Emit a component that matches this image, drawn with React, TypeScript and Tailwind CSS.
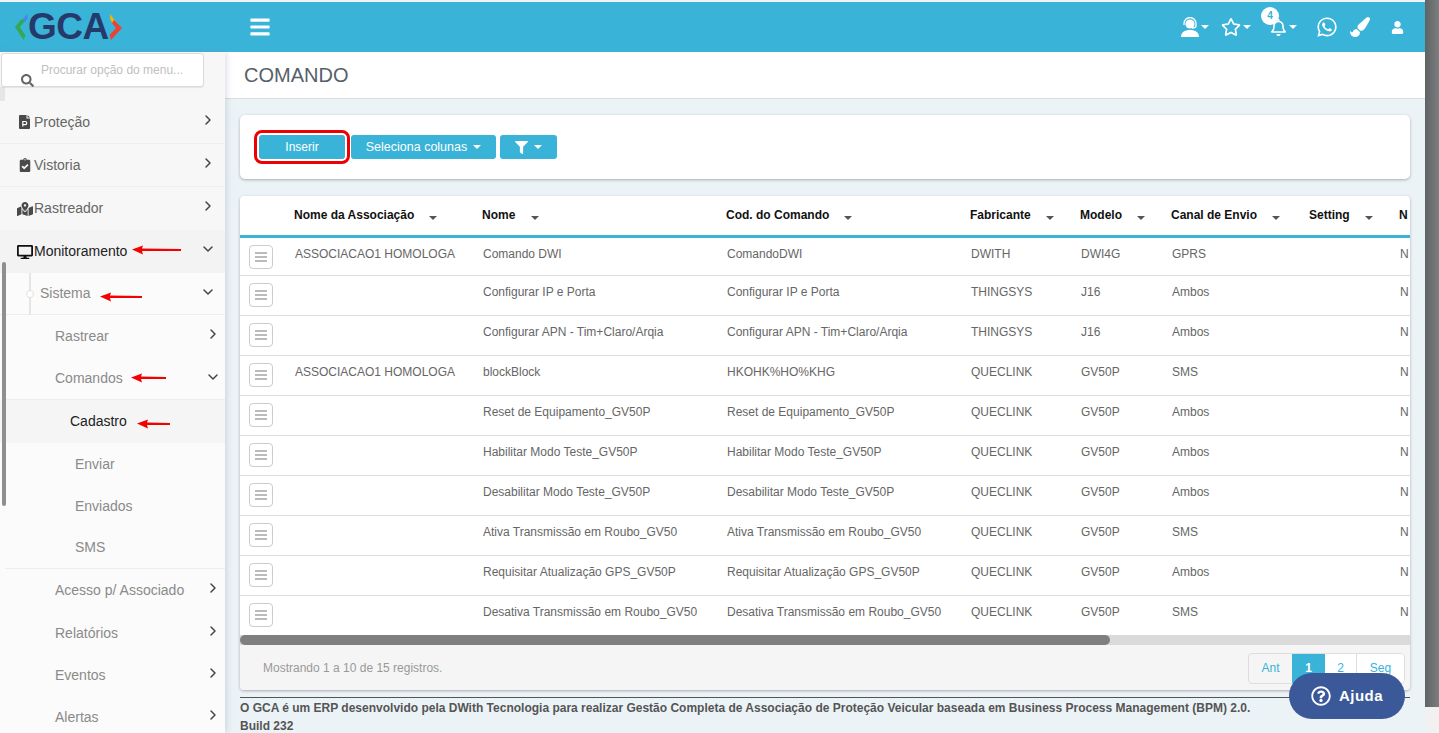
import React from "react";
import { ChevronRight, ChevronDown } from "lucide-react";
import { FaBars, FaClipboardCheck, FaDesktop, FaFilter, FaMapMarkedAlt, FaPaintBrush, FaRegBell, FaRegQuestionCircle, FaRegStar, FaSearch, FaUser, FaWhatsapp } from "react-icons/fa";

const Caret = ({ c = "border-t-white" }: { c?: string }) => (
  <span className={`inline-block w-0 h-0 border-x-[4px] border-x-transparent border-t-[4px] ${c}`} />
);

const Arrow = ({ w, cls }: { w: number; cls: string }) => (
  <svg width={w} height="10" viewBox={`0 0 ${w} 10`} className={`absolute ${cls}`}>
    <polygon points={`0,4.5 11,0.5 10,3.5 ${w},4 ${w},6 10,6 11,9.5`} fill="#f30000" />
  </svg>
);

const FileP = () => (
  <svg width="12" height="14" viewBox="0 0 12 14" className="mx-[1px]">
    <path d="M1 0h6.5v3.5H11V13a1 1 0 0 1-1 1H1a1 1 0 0 1-1-1V1a1 1 0 0 1 1-1zM8.5 0 11 2.6H8.5z" fill="#4a4a4a" />
    <path d="M3.8 11.5V6.5h2.4a1.5 1.5 0 0 1 0 3.2H3.8" fill="none" stroke="#fff" strokeWidth="1.2" />
  </svg>
);

type RowProps = { label: string; pl: number; h: number; open?: boolean; noChev?: boolean; icon?: React.ReactNode; cls?: string; text?: string; children?: React.ReactNode };
const Row = ({ label, pl, h, open, noChev, icon, cls = "", text = "text-[#777]", children }: RowProps) => (
  <div className={`relative flex items-center shrink-0 ${cls}`} style={{ height: h, paddingLeft: pl }}>
    {icon && <span className="absolute left-[17px] top-0 bottom-0 flex items-center w-[16px] justify-center">{icon}</span>}
    <span className={`text-[14px] ${text}`}>{label}</span>
    {!noChev && (
      <span className="absolute left-[200px] top-[11px] text-[#444]">
        {open ? <ChevronDown size={16} strokeWidth={2.2} /> : <ChevronRight size={16} strokeWidth={2.2} />}
      </span>
    )}
    {children}
  </div>
);

const Sidebar = () => (
  <aside className="relative w-[225px] shrink-0 bg-[#f7f7f7] shadow-[2px_0_6px_rgba(120,140,160,0.25)] z-10 overflow-hidden flex flex-col">
    <div className="h-[49px] shrink-0">
      <div className="relative mt-[1px] ml-[1px] w-[203px] h-[34px] bg-white border border-[#dcdcdc] rounded-[3px] shadow-[0_1px_1px_rgba(0,0,0,0.08)]">
        <span className="absolute left-[39px] top-[9px] text-[12px] leading-[14px] text-[#c0c0c0]">Procurar opção do menu...</span>
        <FaSearch className="absolute left-[19px] top-[20px] text-[#666]" size={13} />
      </div>
      <div className="w-[5px] h-[14px] bg-[#e6e6e6]" />
    </div>
    <div className="ml-[5px] flex flex-col">
      <Row label="Proteção" pl={34} h={43} icon={<FileP />} cls="border-b border-[#efefef] -ml-[5px] pl-0" text="text-[#666]" />
      <Row label="Vistoria" pl={34} h={43} icon={<FaClipboardCheck size={14} className="text-[#4a4a4a]" />} cls="border-b border-[#efefef] -ml-[5px]" text="text-[#666]" />
      <Row label="Rastreador" pl={34} h={43} icon={<FaMapMarkedAlt size={16} className="text-[#4a4a4a]" />} cls="-ml-[5px]" text="text-[#666]" />
      <Row label="Monitoramento" pl={34} h={43} open icon={<FaDesktop size={16} className="text-[#111]" />} cls="bg-[#f3f3f3] -ml-[5px]" text="text-[#222]">
        <Arrow w={49} cls="left-[132px] top-[15px]" />
      </Row>
      <div className="-ml-[5px] bg-[#fbfbfb] pl-[5px]">
        <Row label="Sistema" pl={40} h={42} open cls="border-b border-[#eeeeee] -ml-[5px]" text="text-[#8a8a8a]">
          <span className="absolute left-[29px] top-0 h-[42px] w-[2px] bg-[#e5e5e5]" />
          <span className="absolute left-[26px] top-[17px] w-[8px] h-[8px] rounded-full bg-white border border-[#e0e0e0]" />
          <Arrow w={42} cls="left-[100px] top-[19px]" />
        </Row>
        <Row label="Rastrear" pl={50} h={43} text="text-[#8a8a8a]" />
        <Row label="Comandos" pl={50} h={42} open cls="border-b border-[#eeeeee]" text="text-[#8a8a8a]">
          <Arrow w={35} cls="left-[126px] top-[15px]" />
        </Row>
        <Row label="Cadastro" pl={70} h={43} noChev cls="bg-[#f5f5f5] -ml-[5px] pl-[75px]" text="text-[#222]">
          <Arrow w={33} cls="left-[137px] top-[19px]" />
        </Row>
        <Row label="Enviar" pl={70} h={42} noChev text="text-[#8a8a8a]" />
        <Row label="Enviados" pl={70} h={42} noChev text="text-[#8a8a8a]" />
        <Row label="SMS" pl={70} h={42} noChev cls="border-b border-[#eeeeee]" text="text-[#8a8a8a]" />
        <Row label="Acesso p/ Associado" pl={50} h={43} text="text-[#8a8a8a]" />
        <Row label="Relatórios" pl={50} h={42} text="text-[#8a8a8a]" />
        <Row label="Eventos" pl={50} h={42} text="text-[#8a8a8a]" />
        <Row label="Alertas" pl={50} h={42} text="text-[#8a8a8a]" />
      </div>
    </div>
    <div className="absolute left-[2px] top-[210px] w-[4px] h-[244px] rounded-full bg-[#8f8f8f]" />
  </aside>
);

const rows = [
  ["ASSOCIACAO1 HOMOLOGA", "Comando DWI", "ComandoDWI", "DWITH", "DWI4G", "GPRS"],
  ["", "Configurar IP e Porta", "Configurar IP e Porta", "THINGSYS", "J16", "Ambos"],
  ["", "Configurar APN - Tim+Claro/Arqia", "Configurar APN - Tim+Claro/Arqia", "THINGSYS", "J16", "Ambos"],
  ["ASSOCIACAO1 HOMOLOGA", "blockBlock", "HKOHK%HO%KHG", "QUECLINK", "GV50P", "SMS"],
  ["", "Reset de Equipamento_GV50P", "Reset de Equipamento_GV50P", "QUECLINK", "GV50P", "Ambos"],
  ["", "Habilitar Modo Teste_GV50P", "Habilitar Modo Teste_GV50P", "QUECLINK", "GV50P", "Ambos"],
  ["", "Desabilitar Modo Teste_GV50P", "Desabilitar Modo Teste_GV50P", "QUECLINK", "GV50P", "Ambos"],
  ["", "Ativa Transmissão em Roubo_GV50", "Ativa Transmissão em Roubo_GV50", "QUECLINK", "GV50P", "SMS"],
  ["", "Requisitar Atualização GPS_GV50P", "Requisitar Atualização GPS_GV50P", "QUECLINK", "GV50P", "Ambos"],
  ["", "Desativa Transmissão em Roubo_GV50", "Desativa Transmissão em Roubo_GV50", "QUECLINK", "GV50P", "SMS"],
];

const heads: [string, string][] = [
  ["Nome da Associação", "ml-[15px]"],
  ["Nome", "ml-[16px]"],
  ["Cod. do Comando", "ml-[15px]"],
  ["Fabricante", "ml-[15px]"],
  ["Modelo", "ml-[15px]"],
  ["Canal de Envio", "ml-[15px]"],
  ["Setting", "ml-[15px]"],
  ["N", ""],
];
const widths = ["w-[188px]", "w-[244px]", "w-[244px]", "w-[110px]", "w-[91px]", "w-[138px]", "w-[90px]", "w-[100px]"];

const DataTable = () => (
  <div className="overflow-hidden">
    <table className="table-fixed border-collapse w-[1248px] text-[12px]">
      <thead>
        <tr className="h-[40px] border-b-[3px] border-[#3ab3d9]">
          <th className="w-[43px]" />
          {heads.map(([h, m], i) => (
            <th key={h} className={`${widths[i]} pl-[11px] text-left font-bold text-[#111] whitespace-nowrap`}>
              {h}
              {m && <span className={`${m} align-middle inline-block`}><Caret c="border-t-[#555]" /></span>}
            </th>
          ))}
        </tr>
      </thead>
      <tbody>
        {rows.map((r, i) => (
          <tr key={i} className={`${i === 0 ? "h-[39px]" : "h-[40px]"} ${i < 9 ? "border-b border-[#dddddd]" : ""} text-[#666]`}>
            <td className="pl-[9px] align-top pt-[7px]">
              <span className="flex flex-col items-center justify-center gap-[2px] w-[24px] h-[24px] border border-[#cccccc] rounded-[4px]">
                <i className="block w-[12px] h-[2px] bg-[#bbbbbb]" />
                <i className="block w-[12px] h-[2px] bg-[#bbbbbb]" />
                <i className="block w-[12px] h-[2px] bg-[#bbbbbb]" />
              </span>
            </td>
            {r.map((c, j) => (
              <td key={j} className="pl-[12px] align-top pt-[7px] whitespace-nowrap">{c}</td>
            ))}
            <td />
            <td className="pl-[12px] align-top pt-[7px]">N</td>
          </tr>
        ))}
      </tbody>
    </table>
  </div>
);

const Header = () => (
  <header className="h-[52px] shrink-0 border-t-2 border-[#eef3f6] bg-[#3ab3d9] flex items-center relative">
    <div className="w-[225px] flex items-center pl-[15px]">
      <svg width="13" height="28" viewBox="0 0 13 28">
        <path d="M12 1 6.5 8 10 9 13 5z" fill="#4285f4" />
        <path d="M6.5 6 0 14l4 1 6-7z" fill="#34a853" />
        <path d="M0 14l8.5 13 2-4.5L4 13z" fill="#34a853" />
      </svg>
      <span className="font-['Liberation_Sans',sans-serif] font-bold text-[37px] leading-[30px] tracking-[-0.5px] text-[#26396b]">GCA</span>
      <svg width="13" height="28" viewBox="0 0 13 28">
        <path d="M1 1 7 9 4 11 1 6z" fill="#f4b400" />
        <path d="M5 7 13 15 2 27 0.5 22 7 15 3 10z" fill="#ea4335" />
      </svg>
    </div>
    <FaBars className="text-white ml-[24px]" size={22} />
    <div className="ml-auto flex items-center text-white">
      <span className="flex items-center gap-[2px] mr-[12px]">
        <svg width="18" height="20" viewBox="0 0 18 20" fill="none">
          <circle cx="9" cy="7" r="4.6" fill="#fff" />
          <path d="M3 8V6.5a6 6 0 0 1 12 0V9c0 1.2-1.5 2-4 2" stroke="#fff" strokeWidth="1.3" />
          <path d="M0 20c0-4.5 3.5-7 9-7s9 2.5 9 7z" fill="#fff" />
        </svg>
        <Caret />
      </span>
      <span className="flex items-center gap-[2px] mr-[19px]"><FaRegStar size={20} /><Caret /></span>
      <span className="relative flex items-center gap-[2px] mr-[19px]">
        <FaRegBell size={17} />
        <Caret />
        <span className="absolute -left-[9px] -top-[12px] w-[18px] h-[18px] rounded-full bg-white text-[#3ab3d9] text-[10px] font-bold flex items-center justify-center">4</span>
      </span>
      <FaWhatsapp size={22} className="mr-[12px]" />
      <FaPaintBrush size={20} className="mr-[21px]" />
      <FaUser size={13} className="mr-[21px]" />
    </div>
  </header>
);

export default function App() {
  return (
    <div className="w-[1439px] h-[733px] overflow-hidden flex bg-[#ecf3f7] font-['Liberation_Sans',Arial,sans-serif]">
      <div className="w-[1425px] shrink-0 flex flex-col">
        <Header />
        <div className="flex flex-1 min-h-0">
          <Sidebar />
          <main className="flex-1 min-w-0 flex flex-col">
            <div className="h-[47px] shrink-0 bg-white border-b border-[#d8dde1] pl-[19px] flex items-center">
              <h1 className="text-[20px] text-[#56606a] -mt-[1px]">COMANDO</h1>
            </div>
            <div className="px-[15px] pt-[16px] flex flex-col">
              <div className="h-[64px] bg-white rounded-[5px] shadow-[0_1px_3px_rgba(0,0,0,0.3)] flex items-center pl-[19px] gap-[4px] text-white text-[12px]">
                <button className="relative w-[86px] h-[24px] bg-[#3ab3d9] rounded-[3px] mr-[1px] outline outline-[3px] outline-offset-[2px] outline-[#f00000] [outline-offset:2px]">Inserir</button>
                <button className="ml-[1px] w-[145px] h-[24px] bg-[#3ab3d9] rounded-[3px] flex items-center justify-center gap-[6px] text-[12.5px]">Seleciona colunas <Caret /></button>
                <button className="w-[57px] h-[24px] bg-[#3ab3d9] rounded-[3px] flex items-center justify-center gap-[6px]"><FaFilter size={13} /> <Caret /></button>
              </div>
              <div className="mt-[17px] bg-white rounded-[4px] shadow-[0_1px_3px_rgba(0,0,0,0.3)] overflow-hidden flex flex-col">
                <DataTable />
                <div className="h-[10px] bg-[#dadada]">
                  <div className="w-[870px] h-[10px] rounded-full bg-[#7f7f7f]" />
                </div>
                <div className="h-[45px] bg-[#f5f5f5] flex items-center pl-[23px] pr-[5px] text-[12px] text-[#999]">
                  <span>Mostrando 1 a 10 de 15 registros.</span>
                  <div className="ml-auto mt-[1px] flex h-[31px] border border-[#dddddd] rounded-[4px] overflow-hidden text-[#3ab3d9]">
                    <span className="w-[43px] flex items-center justify-center">Ant</span>
                    <span className="w-[33px] flex items-center justify-center bg-[#3ab3d9] text-white font-bold">1</span>
                    <span className="w-[32px] flex items-center justify-center bg-white border-r border-[#dddddd]">2</span>
                    <span className="w-[47px] flex items-center justify-center bg-white">Seg</span>
                  </div>
                </div>
              </div>
              <footer className="mt-[7px] border-t border-[#555] pt-[1px] text-[12px] leading-[18px] font-bold text-[#555]">
                O GCA é um ERP desenvolvido pela DWith Tecnologia para realizar Gestão Completa de Associação de Proteção Veicular baseada em Business Process Management (BPM) 2.0.
                <br />
                Build 232
              </footer>
            </div>
          </main>
        </div>
      </div>
      <div className="w-[14px] shrink-0 bg-[#f1f1f1]">
        <div className="h-[707px] bg-gradient-to-r from-[#5f6363] to-[#7c7f7f]" />
      </div>
      <button className="fixed left-[1289px] top-[673px] w-[116px] h-[46px] rounded-full bg-[#3b5998] text-white flex items-center justify-center gap-[8px] font-bold text-[15px] tracking-[0.5px] z-20">
        <FaRegQuestionCircle size={20} /> Ajuda
      </button>
    </div>
  );
}
